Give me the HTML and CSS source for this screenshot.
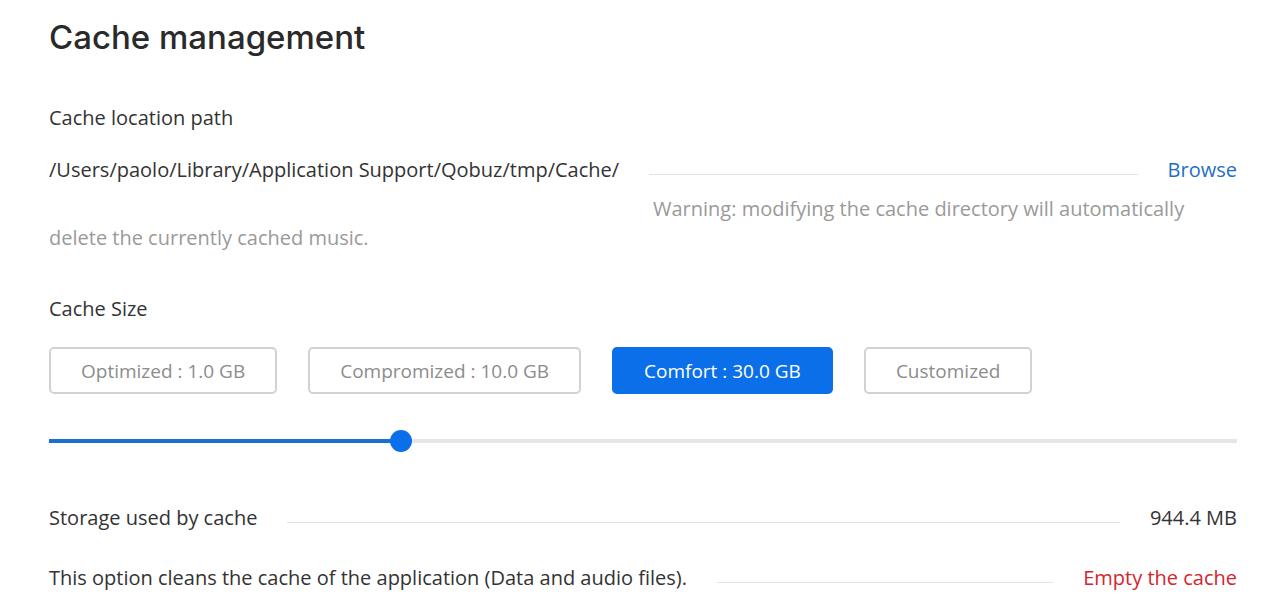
FILE: index.html
```html
<!DOCTYPE html>
<html>
<head>
    <title>Cache management</title>
    <link rel="stylesheet" href="styles.css">
</head>
<body>
    <div class="page">
        <h1 class="title">Cache management</h1>

        <p class="label location-label">Cache location path</p>
        <div class="row path-row">
            <span class="row-text">/Users/paolo/Library/Application Support/Qobuz/tmp/Cache/</span>
            <span class="row-line"></span>
            <a class="row-action browse">Browse</a>
        </div>
        <p class="warning">Warning: modifying the cache directory will automatically delete the currently cached music.</p>

        <p class="label size-label">Cache Size</p>
        <div class="size-options">
            <button class="size-btn">Optimized : 1.0 GB</button>
            <button class="size-btn">Compromized : 10.0 GB</button>
            <button class="size-btn size-btn-active">Comfort : 30.0 GB</button>
            <button class="size-btn">Customized</button>
        </div>

        <div class="slider">
            <div class="slider-track"></div>
            <div class="slider-fill" style="width: 29.6%"></div>
            <div class="slider-thumb" style="left: 29.6%"></div>
        </div>

        <div class="row storage-row">
            <span class="row-text">Storage used by cache</span>
            <span class="row-line"></span>
            <span class="row-value">944.4 MB</span>
        </div>
        <div class="row clean-row">
            <span class="row-text">This option cleans the cache of the application (Data and audio files).</span>
            <span class="row-line"></span>
            <a class="row-action empty">Empty the cache</a>
        </div>
    </div>
</body>
</html>
```

FILE: styles.css
```css
body {
    margin: 0;
    background-color: #ffffff;
    font-family: "Open Sans", "Liberation Sans", sans-serif;
    color: #333333;
}

.page {
    padding: 17px 43px 0 49px;
}

.title {
    margin: 0;
    font-family: Inter, "Liberation Sans", sans-serif;
    font-size: 33px;
    font-weight: 500;
    line-height: 40px;
    color: #2a2a2a;
}

.label {
    margin: 0;
    font-size: 20px;
    line-height: 24px;
}

.location-label {
    margin-top: 49px;
}

.size-label {
    margin-top: 45px;
}

.row {
    display: flex;
    align-items: center;
    gap: 30px;
    font-size: 20px;
    line-height: 24px;
}

.row-line {
    flex: 1;
    height: 1px;
    margin-top: 8px;
    background-color: #e2e2e2;
}

.row-action {
    cursor: pointer;
}

.browse {
    color: #1f6fc5;
}

.empty {
    color: #d3262e;
}

.path-row {
    margin-top: 28px;
}

.warning {
    margin: 12px 0 0 0;
    font-size: 20px;
    line-height: 29px;
    text-indent: 604px;
    color: #9a9a9a;
}

.size-options {
    display: flex;
    gap: 31px;
    margin-top: 26px;
}

.size-btn {
    height: 47px;
    padding: 0 30px;
    font-family: "Open Sans", "Liberation Sans", sans-serif;
    font-size: 19px;
    color: #8c8c8c;
    background-color: #ffffff;
    border: 2px solid #d2d2d2;
    border-radius: 5px;
    cursor: pointer;
}

.size-btn-active {
    color: #ffffff;
    background-color: #0a6fe8;
    border-color: #0a6fe8;
}

.slider {
    position: relative;
    height: 24px;
    margin-top: 35px;
}

.slider-track {
    position: absolute;
    left: 0;
    right: 0;
    top: 10px;
    height: 4px;
    background-color: #e6e6e6;
}

.slider-fill {
    position: absolute;
    left: 0;
    top: 10px;
    height: 4px;
    background-color: #1a6fd0;
}

.slider-thumb {
    position: absolute;
    top: 1px;
    width: 22px;
    height: 22px;
    margin-left: -11px;
    border-radius: 50%;
    background-color: #0a6fe8;
}

.storage-row {
    margin-top: 53px;
}

.clean-row {
    margin-top: 36px;
}

.row-value {
    color: #333333;
}
```
